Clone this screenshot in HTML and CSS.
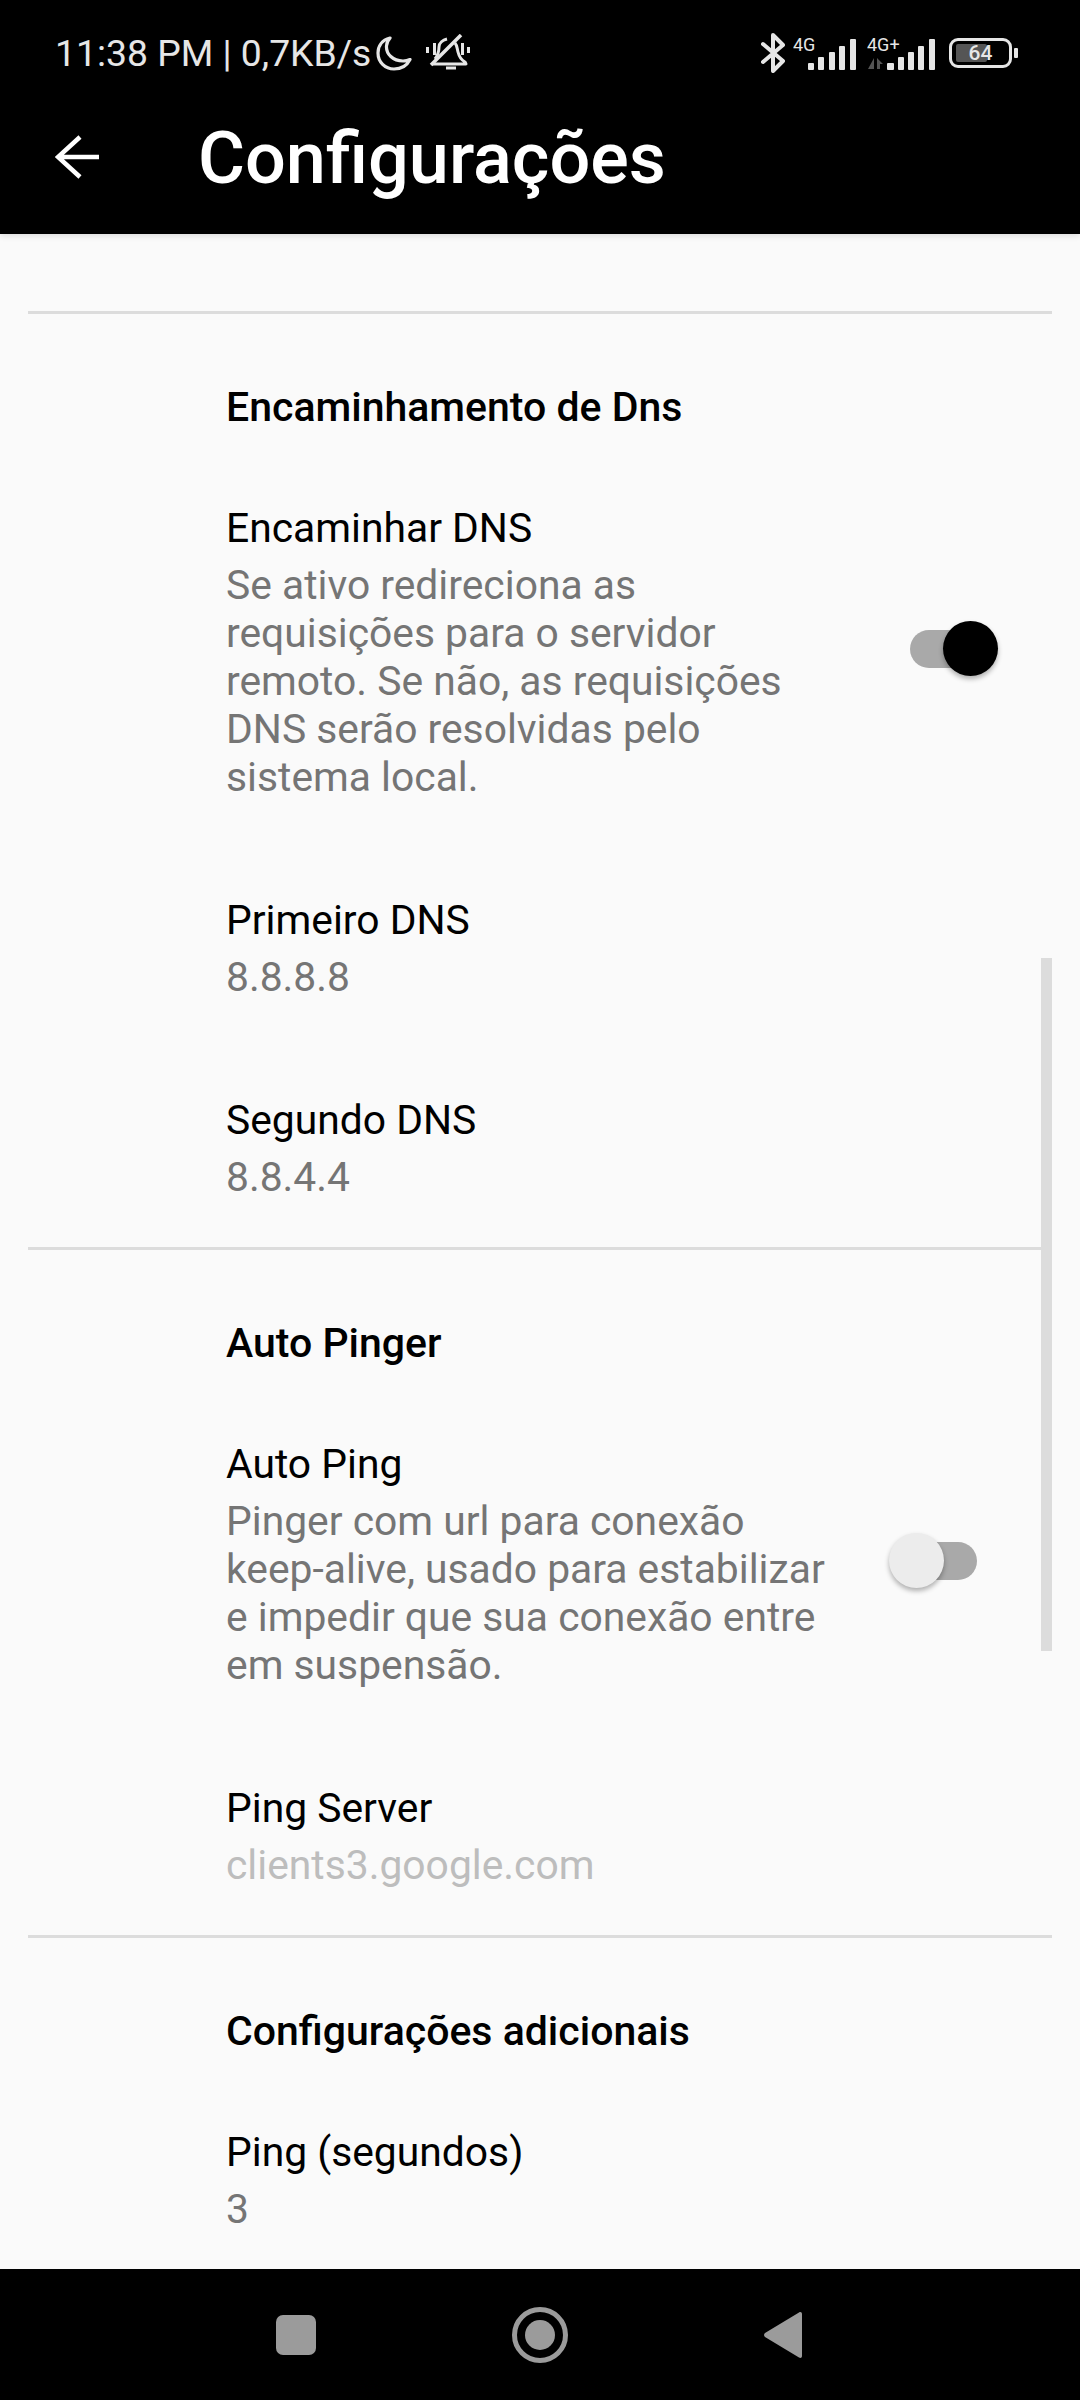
FILE: index.html
```html
<!DOCTYPE html>
<html lang="pt">

<head>
    <meta charset="UTF-8">
    <meta name="viewport" content="width=device-width, initial-scale=1.0">
    <title>Configurações</title>
    <link rel="stylesheet" href="styles.css">
</head>

<body>
    <div class="screen">
        <header class="appbar">
            <div class="statusbar">
                <div class="status-left">
                    <span class="status-text">11:38 PM | 0,7KB/s</span>
                    <svg class="icon-moon" width="36" height="35" viewBox="0 0 36 35" fill="none" stroke="#e6e6e6" stroke-width="3.2" stroke-linejoin="round">
                        <path d="M14 2C6 4 2 10 2 17c0 9 7 16 16 16 7 0 13-3.500 16-9.500-2 1-4.500 1.500-7 1.500C17 25 10 18 10.500 10 10.700 7 12 4 14 2Z" />
                    </svg>
                    <svg class="icon-bell" width="44" height="38" viewBox="0 0 44 38" fill="none" stroke="#e6e6e6" stroke-width="3">
                        <path d="M9 25c3-4 4-8 4-12 0-4 4-7 8-8" stroke-linejoin="round" />
                        <path d="M29 9c2 2 2 5 3 9 1 4 3 8 7 10l1 2H6" stroke-linejoin="round" />
                        <path d="M5 31 35 1" stroke-width="3.500" />
                        <path d="M1.500 13v6M8.500 9v12M36.500 9v12M42.500 13v6" />
                        <path d="M20 34h10" />
                    </svg>
                </div>
                <div class="status-right">
                    <svg width="24" height="40" viewBox="0 0 24 40" fill="none" stroke="#e6e6e6" stroke-width="4" stroke-linejoin="round" stroke-linecap="round">
                        <path d="M2 11 22 28 12 38V2l10 10L2 29" />
                    </svg>
                    <svg class="signal" width="63" height="36" viewBox="0 0 63 36">
                        <text x="0" y="16">4G</text>
                        <rect x="15" y="28" width="6" height="7" rx="1" />
                        <rect x="25" y="22" width="6" height="13" rx="1" />
                        <rect x="36" y="17" width="6" height="18" rx="1" />
                        <rect x="46" y="11" width="6" height="24" rx="1" />
                        <rect x="57" y="4" width="6" height="31" rx="1" />
                    </svg>
                    <svg class="signal" width="68" height="36" viewBox="0 0 68 36">
                        <text x="0" y="16">4G+</text>
                        <path class="signal-arrows" d="M7 23v11H1ZM10 23l6 6h-3v5h-3Z" />
                        <rect x="20" y="28" width="7" height="7" rx="1" />
                        <rect x="31" y="22" width="6" height="13" rx="1" />
                        <rect x="41" y="17" width="6" height="18" rx="1" />
                        <rect x="51" y="11" width="6" height="24" rx="1" />
                        <rect x="62" y="4" width="6" height="31" rx="1" />
                    </svg>
                    <div class="battery">
                        <div class="battery-body">
                            <div class="battery-fill"></div>
                            <span class="battery-level">64</span>
                        </div>
                        <div class="battery-nub"></div>
                    </div>
                </div>
            </div>
            <div class="toolbar">
                <svg class="back" width="44" height="44" viewBox="0 0 44 44" fill="none" stroke="#fff" stroke-width="4.500" stroke-linejoin="miter">
                    <path d="M44 22H3M25 2 3 22l22 20" />
                </svg>
                <h1 class="title">Configurações</h1>
            </div>
        </header>

        <main class="content">
            <section class="section">
                <h2 class="section-title">Encaminhamento de Dns</h2>
                <div class="pref pref-row">
                    <div class="pref-text">
                        <div class="pref-title">Encaminhar DNS</div>
                        <div class="pref-summary">Se ativo redireciona as requisições para o servidor remoto. Se não, as requisições DNS serão resolvidas pelo sistema local.</div>
                    </div>
                    <div class="switch switch-on">
                        <div class="switch-track"></div>
                        <div class="switch-thumb"></div>
                    </div>
                </div>
                <div class="pref">
                    <div class="pref-title">Primeiro DNS</div>
                    <div class="pref-summary">8.8.8.8</div>
                </div>
                <div class="pref">
                    <div class="pref-title">Segundo DNS</div>
                    <div class="pref-summary">8.8.4.4</div>
                </div>
            </section>

            <section class="section">
                <h2 class="section-title">Auto Pinger</h2>
                <div class="pref pref-row">
                    <div class="pref-text pref-text-wide">
                        <div class="pref-title">Auto Ping</div>
                        <div class="pref-summary">Pinger com url para conexão keep-alive, usado para estabilizar e impedir que sua conexão entre em suspensão.</div>
                    </div>
                    <div class="switch switch-off">
                        <div class="switch-track"></div>
                        <div class="switch-thumb"></div>
                    </div>
                </div>
                <div class="pref">
                    <div class="pref-title">Ping Server</div>
                    <div class="pref-summary pref-disabled">clients3.google.com</div>
                </div>
            </section>

            <section class="section">
                <h2 class="section-title">Configurações adicionais</h2>
                <div class="pref">
                    <div class="pref-title">Ping (segundos)</div>
                    <div class="pref-summary">3</div>
                </div>
            </section>

            <div class="scrollbar"></div>
        </main>

        <nav class="navbar">
            <div class="nav-square"></div>
            <div class="nav-home">
                <div class="nav-home-dot"></div>
            </div>
            <svg width="38" height="46" viewBox="0 0 38 46" fill="#9b9b9b">
                <path d="M35 .5c1.500-1 3-.4 3 1.500v42c0 1.800-1.500 2.500-3 1.500L1 25c-1.300-1-1.300-3 0-4Z" />
            </svg>
        </nav>
    </div>
</body>

</html>
```

FILE: styles.css
```css
* {
    box-sizing: border-box;
}

body {
    margin: 0;
    font-family: Roboto, "Noto Sans", sans-serif;
    background: #fafafa;
}

.screen {
    display: flex;
    flex-direction: column;
    width: 1080px;
    height: 2400px;
    overflow: hidden;
}

.appbar {
    position: relative;
    z-index: 1;
    height: 234px;
    background: #000;
    box-shadow: 0 2px 6px rgba(0, 0, 0, 0.12);
}

.statusbar {
    display: flex;
    align-items: center;
    justify-content: space-between;
    height: 106px;
    padding: 0 62px 0 55px;
}

.status-left,
.status-right {
    display: flex;
    align-items: center;
}

.status-text {
    font-size: 37.3px;
    color: #e6e6e6;
}

.icon-moon {
    margin-left: 5px;
}

.icon-bell {
    margin-left: 14px;
}

.status-right {
    gap: 8px;
}

.signal text {
    font-size: 18px;
    fill: #e6e6e6;
}

.signal rect {
    fill: #e6e6e6;
}

.signal-arrows {
    fill: #555;
}

.signal + .signal {
    margin-left: 3px;
}

.battery {
    display: flex;
    align-items: center;
    gap: 2px;
    margin-left: 6px;
}

.battery-body {
    position: relative;
    display: flex;
    align-items: center;
    justify-content: center;
    width: 63px;
    height: 30px;
    border: 3px solid #e6e6e6;
    border-radius: 9px;
}

.battery-fill {
    position: absolute;
    top: 3px;
    left: 4px;
    width: 31px;
    height: 18px;
    border-radius: 2px;
    background: #555;
}

.battery-level {
    position: relative;
    font-size: 21px;
    font-weight: 500;
    color: #e6e6e6;
}

.battery-nub {
    width: 4px;
    height: 10px;
    border-radius: 1px;
    background: #e6e6e6;
}

.toolbar {
    display: flex;
    align-items: center;
    height: 102px;
    padding-left: 55px;
}

.back {
    margin-right: 99px;
}

.title {
    margin: 3px 0 0;
    font-size: 72px;
    font-weight: 500;
    color: #fff;
}

.content {
    position: relative;
    flex: 1;
    overflow: hidden;
    padding-top: 77px;
}

.section {
    margin: 0 28px 2px;
    border-top: 3px solid #dcdcdc;
}

.section-title {
    margin: 0;
    padding: 65px 0 18px 198px;
    font-size: 41px;
    line-height: 56px;
    font-weight: 500;
    color: #000;
}

.pref {
    padding: 43px 0 44px 198px;
}

.pref-row {
    display: flex;
    align-items: center;
}

.pref-text {
    width: 575px;
}

.pref-text-wide {
    width: 605px;
}

.pref-title {
    font-size: 40.8px;
    line-height: 65px;
    color: #000;
}

.pref-summary {
    font-size: 40.8px;
    line-height: 48px;
    color: #757575;
}

.pref-disabled {
    color: #bdbdbd;
}

.switch {
    position: relative;
    flex-shrink: 0;
    width: 88px;
    height: 55px;
    margin-left: auto;
}

.switch-on {
    margin-right: 54px;
}

.switch-off {
    margin-right: 75px;
}

.switch-track {
    position: absolute;
    top: 9px;
    width: 74px;
    height: 38px;
    border-radius: 19px;
    background: #a9a9a9;
}

.switch-thumb {
    position: absolute;
    top: 0;
    width: 55px;
    height: 55px;
    border-radius: 50%;
    box-shadow: 0 3px 5px rgba(0, 0, 0, 0.3);
}

.switch-on .switch-track {
    left: 0;
}

.switch-on .switch-thumb {
    right: 0;
    background: #000;
}

.switch-off .switch-track {
    right: 0;
}

.switch-off .switch-thumb {
    left: 0;
    background: #ececec;
}

.scrollbar {
    position: absolute;
    top: 724px;
    right: 28px;
    width: 11px;
    height: 693px;
    background: #dcdcdc;
}

.navbar {
    display: flex;
    align-items: center;
    gap: 196px;
    height: 131px;
    padding-left: 276px;
    background: #000;
}

.nav-square {
    width: 40px;
    height: 40px;
    border-radius: 7px;
    background: #9b9b9b;
}

.nav-home {
    display: flex;
    align-items: center;
    justify-content: center;
    width: 56px;
    height: 56px;
    border: 5px solid #9b9b9b;
    border-radius: 50%;
}

.nav-home-dot {
    width: 30px;
    height: 30px;
    border-radius: 50%;
    background: #9b9b9b;
}
```
